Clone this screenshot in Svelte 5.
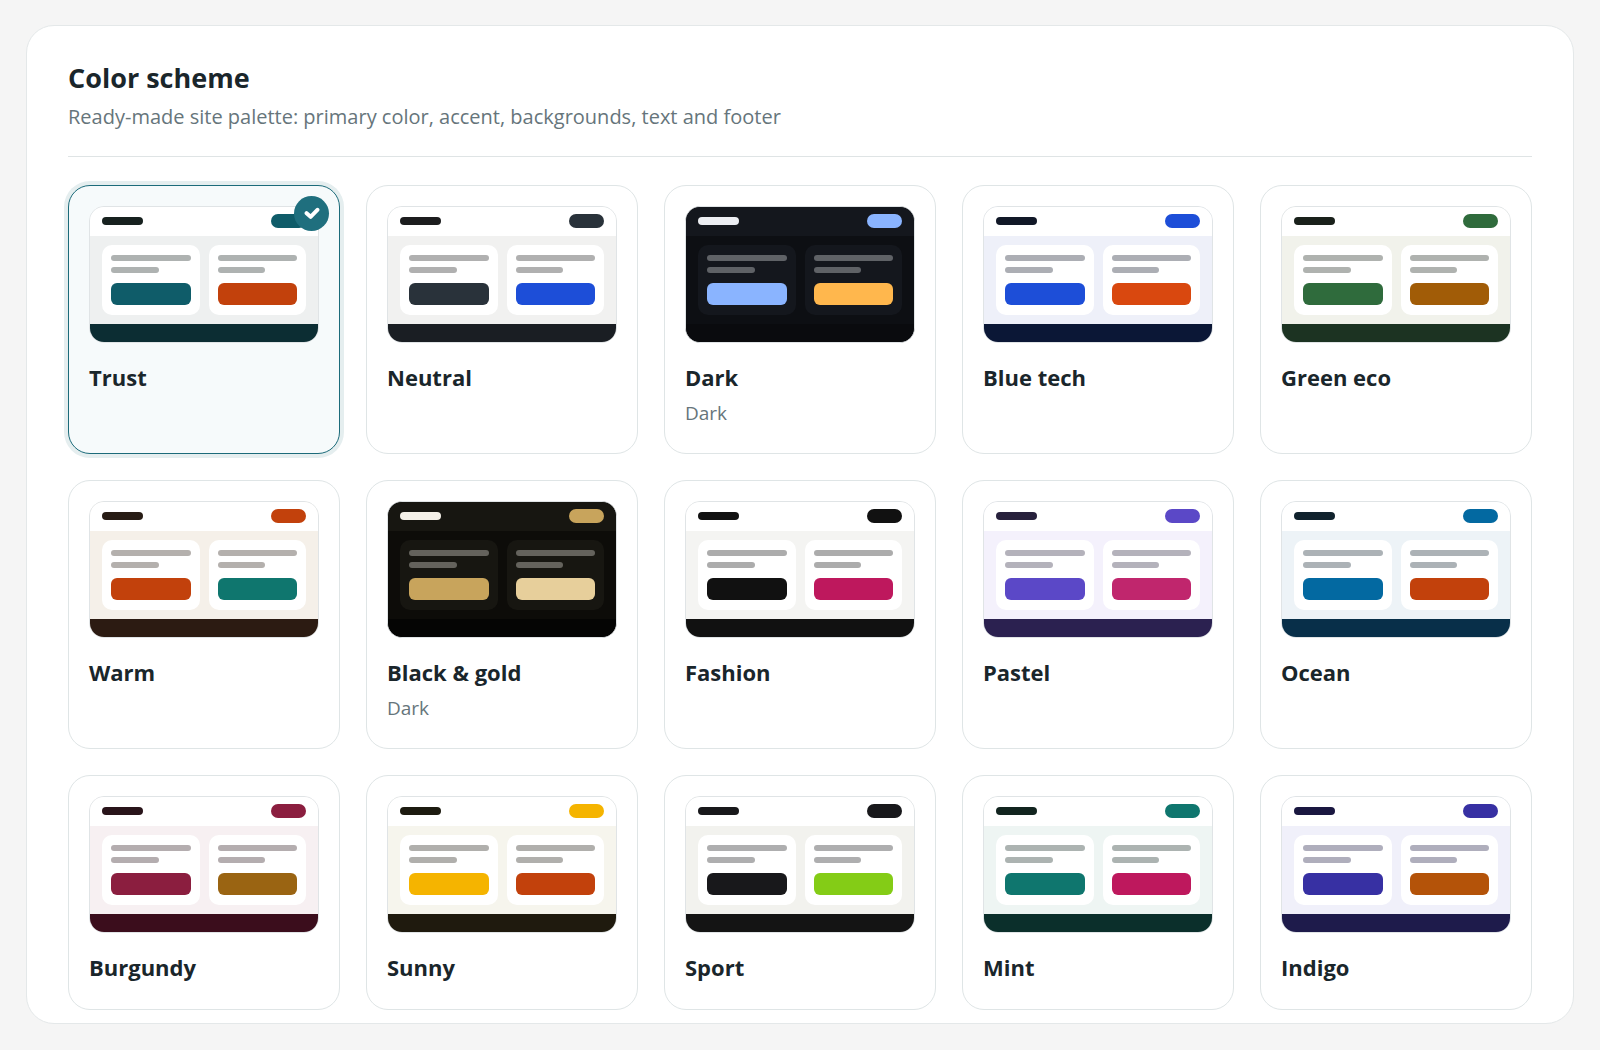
<script lang="ts">
	interface Scheme {
		id: string;
		name: string;
		dark?: boolean;
		primary: string;
		accent: string;
		bg: string;
		surface: string;
		text: string;
		footer: string;
	}

	const schemes: Scheme[] = [
		{ id: 'trust', name: 'Trust', primary: '#0f5c69', accent: '#c2410c', bg: '#eef0f0', surface: '#ffffff', text: '#17211f', footer: '#0c2d33' },
		{ id: 'neutral', name: 'Neutral', primary: '#29323a', accent: '#1d4ed8', bg: '#f1f1f0', surface: '#ffffff', text: '#1c1d1e', footer: '#1a1e23' },
		{ id: 'dark', name: 'Dark', dark: true, primary: '#8ab4ff', accent: '#ffb74d', bg: '#0d0f13', surface: '#14171d', text: '#eceef2', footer: '#0a0b0e' },
		{ id: 'blue-tech', name: 'Blue tech', primary: '#1d4ed8', accent: '#d9480f', bg: '#eef0f9', surface: '#ffffff', text: '#111827', footer: '#0b1736' },
		{ id: 'green-eco', name: 'Green eco', primary: '#2f6b3c', accent: '#a15c07', bg: '#f1f2eb', surface: '#ffffff', text: '#1a211b', footer: '#1c3322' },
		{ id: 'warm', name: 'Warm', primary: '#c2410c', accent: '#0f766e', bg: '#f5f0e9', surface: '#ffffff', text: '#271c15', footer: '#2c1b12' },
		{ id: 'black-gold', name: 'Black & gold', dark: true, primary: '#c8a45c', accent: '#e7cf9b', bg: '#0d0c09', surface: '#171611', text: '#f4f0e8', footer: '#050504' },
		{ id: 'fashion', name: 'Fashion', primary: '#111111', accent: '#be185d', bg: '#f4f4f2', surface: '#ffffff', text: '#111111', footer: '#111111' },
		{ id: 'pastel', name: 'Pastel', primary: '#5b48c7', accent: '#c0266d', bg: '#f4f1fc', surface: '#ffffff', text: '#27213c', footer: '#2b2150' },
		{ id: 'ocean', name: 'Ocean', primary: '#0369a1', accent: '#c2410c', bg: '#edf3f7', surface: '#ffffff', text: '#10222d', footer: '#082f49' },
		{ id: 'burgundy', name: 'Burgundy', primary: '#8b1e3f', accent: '#9a6412', bg: '#f7f0f2', surface: '#ffffff', text: '#29141a', footer: '#3b0d1c' },
		{ id: 'sunny', name: 'Sunny', primary: '#f5b400', accent: '#c2410c', bg: '#f6f5ed', surface: '#ffffff', text: '#1d1b10', footer: '#1f1a0e' },
		{ id: 'sport', name: 'Sport', primary: '#18181b', accent: '#84cc16', bg: '#f2f2ee', surface: '#ffffff', text: '#18181b', footer: '#141414' },
		{ id: 'mint', name: 'Mint', primary: '#0f766e', accent: '#be185d', bg: '#eef5f3', surface: '#ffffff', text: '#12241f', footer: '#0b2f2b' },
		{ id: 'indigo', name: 'Indigo', primary: '#3730a3', accent: '#b45309', bg: '#f0f0fa', surface: '#ffffff', text: '#1a1740', footer: '#1e1b4b' },
	];

	let selected = $state('trust');
</script>

<section class="panel">
	<header class="panel-head">
		<h2>Color scheme</h2>
		<p>Ready-made site palette: primary color, accent, backgrounds, text and footer</p>
	</header>

	<div class="scheme-grid">
		{#each schemes as scheme (scheme.id)}
			<button
				type="button"
				class="scheme-card"
				class:selected={selected === scheme.id}
				aria-pressed={selected === scheme.id}
				onclick={() => (selected = scheme.id)}
			>
				<span
					class="preview"
					style:--primary={scheme.primary}
					style:--accent={scheme.accent}
					style:--bg={scheme.bg}
					style:--surface={scheme.surface}
					style:--text={scheme.text}
					style:--footer={scheme.footer}
				>
					<span class="preview-header">
						<span class="logo"></span>
						<span class="pill"></span>
					</span>
					<span class="preview-body">
						<span class="tile">
							<span class="line"></span>
							<span class="line short"></span>
							<span class="cta"></span>
						</span>
						<span class="tile">
							<span class="line"></span>
							<span class="line short"></span>
							<span class="cta accent"></span>
						</span>
					</span>
					<span class="preview-footer"></span>
				</span>
				<span class="name">{scheme.name}</span>
				{#if scheme.dark}
					<span class="note">Dark</span>
				{/if}
				{#if selected === scheme.id}
					<span class="check">
						<svg viewBox="0 0 16 16" width="16" height="16" aria-hidden="true">
							<path d="M2.6 7.2 6.6 10.8 13.4 3.8" />
						</svg>
					</span>
				{/if}
			</button>
		{/each}
	</div>
</section>

<style>
	:global(body) {
		margin: 0;
		background: #f5f5f5;
		font-family: 'Open Sans', 'Noto Sans', sans-serif;
	}

	.panel {
		margin: 25px 26px;
		padding: 32px 41px 13px;
		border: 1px solid #e4e8e9;
		border-radius: 28px;
		background: #fff;
	}

	.panel-head {
		padding-bottom: 23px;
		border-bottom: 1px solid #dfe4e5;
		margin-bottom: 28px;
	}

	h2 {
		margin: 0;
		font-size: 27px;
		line-height: 40px;
		font-weight: 700;
		color: #1a262b;
	}

	p {
		margin: 0;
		padding-top: 3px;
		font-size: 20px;
		line-height: 32px;
		color: #66757b;
	}

	.scheme-grid {
		display: grid;
		grid-template-columns: repeat(5, minmax(0, 1fr));
		gap: 26px;
	}

	.scheme-card {
		position: relative;
		display: flex;
		flex-direction: column;
		align-items: stretch;
		padding: 20px 20px 26px;
		border: 1px solid #dfe5e6;
		border-radius: 22px;
		background: #fff;
		font-family: inherit;
		text-align: left;
		cursor: pointer;
	}

	.scheme-card.selected {
		border-color: #1c6b7a;
		background: #f6fafb;
		box-shadow: 0 0 0 4px #e5eeef;
	}

	.preview {
		display: flex;
		flex-direction: column;
		overflow: hidden;
		border: 1px solid #e0e4e6;
		border-radius: 15px;
		margin-bottom: 18px;
		background: var(--bg);
	}

	.preview-header {
		display: flex;
		align-items: center;
		justify-content: space-between;
		padding: 7px 12px 8px;
		background: var(--surface);
	}

	.logo {
		width: 41px;
		height: 8px;
		border-radius: 4px;
		background: var(--text);
	}

	.pill {
		width: 35px;
		height: 14px;
		border-radius: 7px;
		background: var(--primary);
	}

	.preview-body {
		display: grid;
		grid-template-columns: 1fr 1fr;
		gap: 9px;
		padding: 9px 12px;
	}

	.tile {
		display: flex;
		flex-direction: column;
		gap: 6px;
		padding: 10px 9px;
		border-radius: 10px;
		background: var(--surface);
	}

	.line {
		height: 6px;
		border-radius: 3px;
		background: var(--text);
		opacity: 0.35;
	}

	.line.short {
		width: 60%;
	}

	.cta {
		height: 22px;
		margin-top: 4px;
		border-radius: 6px;
		background: var(--primary);
	}

	.cta.accent {
		background: var(--accent);
	}

	.preview-footer {
		height: 18px;
		background: var(--footer);
	}

	.name {
		font-size: 22px;
		line-height: 32px;
		font-weight: 700;
		color: #1a262b;
	}

	.note {
		padding-top: 7px;
		font-size: 19px;
		line-height: 27px;
		color: #66757b;
	}

	.check {
		position: absolute;
		top: 10px;
		right: 10px;
		display: flex;
		align-items: center;
		justify-content: center;
		width: 35px;
		height: 35px;
		border-radius: 50%;
		background: #1f6f7e;
	}

	.check path {
		fill: none;
		stroke: #fff;
		stroke-width: 4;
		stroke-linecap: round;
		stroke-linejoin: round;
	}
</style>
